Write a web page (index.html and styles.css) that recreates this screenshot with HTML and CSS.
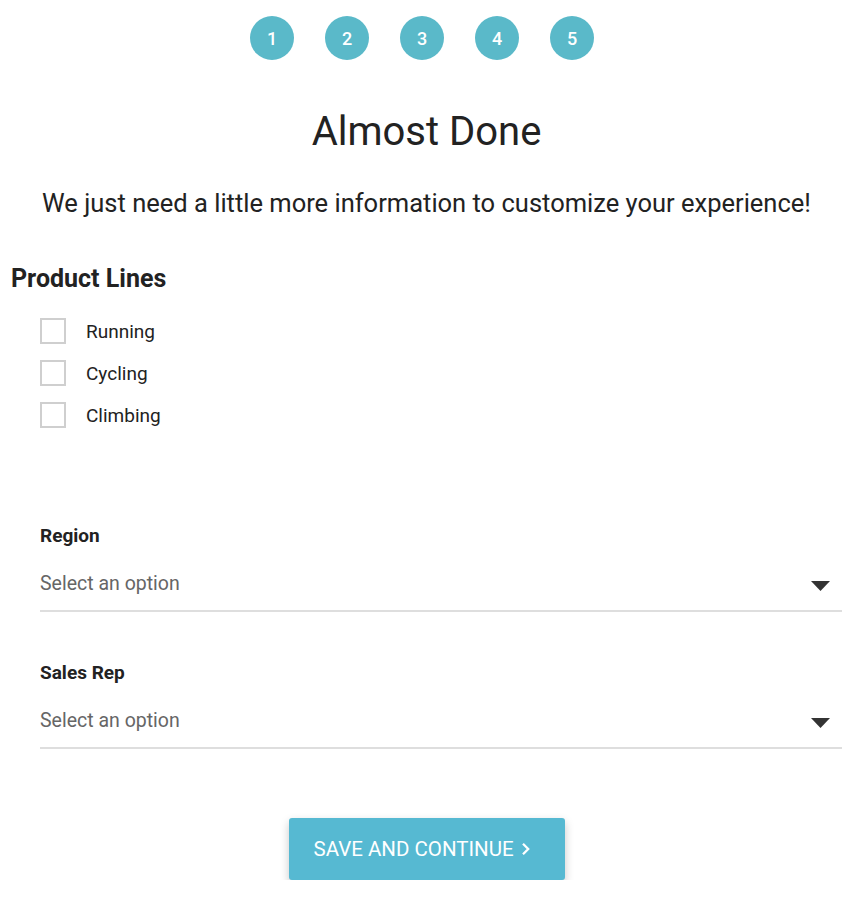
FILE: index.html
```html
<!DOCTYPE html>
<html lang="en">
<head>
<meta charset="utf-8">
<title>Almost Done</title>
<link rel="stylesheet" href="styles.css">
</head>
<body>
<div class="page">
  <div class="steps">
    <span class="step">1</span>
    <span class="step">2</span>
    <span class="step">3</span>
    <span class="step">4</span>
    <span class="step">5</span>
  </div>
  <h1 class="title">Almost Done</h1>
  <p class="subtitle">We just need a little more information to customize your experience!</p>

  <h2 class="section-title">Product Lines</h2>
  <div class="checks">
    <label class="check"><span class="box"></span><span class="check-label">Running</span></label>
    <label class="check"><span class="box"></span><span class="check-label">Cycling</span></label>
    <label class="check"><span class="box"></span><span class="check-label">Climbing</span></label>
  </div>

  <div class="fields">
    <div class="field">
      <div class="field-label">Region</div>
      <div class="select">
        <span class="placeholder">Select an option</span>
        <svg class="caret" width="19" height="10" viewBox="0 0 19 10"><path d="M0 0 H19 L9.5 10 Z" fill="#333"/></svg>
      </div>
    </div>
    <div class="field">
      <div class="field-label">Sales Rep</div>
      <div class="select">
        <span class="placeholder">Select an option</span>
        <svg class="caret" width="19" height="10" viewBox="0 0 19 10"><path d="M0 0 H19 L9.5 10 Z" fill="#333"/></svg>
      </div>
    </div>
  </div>

  <div class="actions">
    <button class="btn" type="button">SAVE AND CONTINUE
      <svg class="chev" width="10" height="14" viewBox="0 0 10 14"><path d="M2 1.8 L7.2 7 L2 12.2" fill="none" stroke="#fff" stroke-width="2.3"/></svg>
    </button>
  </div>
</div>
</body>
</html>
```

FILE: styles.css
```css
* { box-sizing: border-box; }

body {
  margin: 0;
  background: #fff;
  font-family: Roboto, "Liberation Sans", Arial, sans-serif;
  color: #222;
}

.page {
  width: 853px;
  padding: 16px 11px 0;
}

.steps {
  display: flex;
  justify-content: center;
  gap: 31px;
  padding-right: 9px;
}

.step {
  width: 44px;
  height: 44px;
  border-radius: 50%;
  background: #5ab9c9;
  color: #fff;
  font-size: 18px;
  font-weight: 500;
  display: flex;
  align-items: center;
  justify-content: center;
}

.title {
  margin: 48px 0 0;
  font-size: 40px;
  line-height: 48px;
  font-weight: 400;
  text-align: center;
  color: #222;
}

.subtitle {
  margin: 32px 0 0;
  font-size: 25.5px;
  line-height: 30px;
  text-align: center;
  color: #222;
}

.section-title {
  margin: 46px 0 0;
  font-size: 25px;
  line-height: 30px;
  font-weight: 700;
  color: #222;
}

.checks {
  margin: 16px 0 0 29px;
  display: flex;
  flex-direction: column;
}

.check {
  height: 42px;
  display: flex;
  align-items: center;
  gap: 20px;
}

.box {
  width: 26px;
  height: 26px;
  border: 2px solid #cfcfcf;
  background: #fff;
}

.check-label {
  font-size: 19px;
  line-height: 24px;
  color: #222;
  padding-top: 2px;
}

.fields {
  margin: 88px 0 0 29px;
  display: flex;
  flex-direction: column;
  gap: 49px;
}

.field-label {
  font-size: 19px;
  line-height: 24px;
  font-weight: 700;
  color: #222;
}

.select {
  margin-top: 24px;
  display: flex;
  align-items: center;
  justify-content: space-between;
  padding: 0 12px 14px 0;
  border-bottom: 2px solid #dedede;
}

.placeholder {
  font-size: 19.5px;
  line-height: 24px;
  color: #666;
}

.caret { display: block; margin-top: 3px; }

.actions {
  margin-top: 69px;
  display: flex;
  justify-content: center;
}

.btn {
  width: 276px;
  height: 62px;
  border: 0;
  border-radius: 3px;
  background: #56b9d2;
  color: #fff;
  font-family: Roboto, "Liberation Sans", Arial, sans-serif;
  font-size: 20.5px;
  font-weight: 400;
  display: flex;
  align-items: center;
  justify-content: flex-start;
  padding: 0 0 0 25px;
  gap: 7px;
  box-shadow: 0 4px 10px rgba(0, 0, 0, 0.22);
}

.chev { display: block; }
```
